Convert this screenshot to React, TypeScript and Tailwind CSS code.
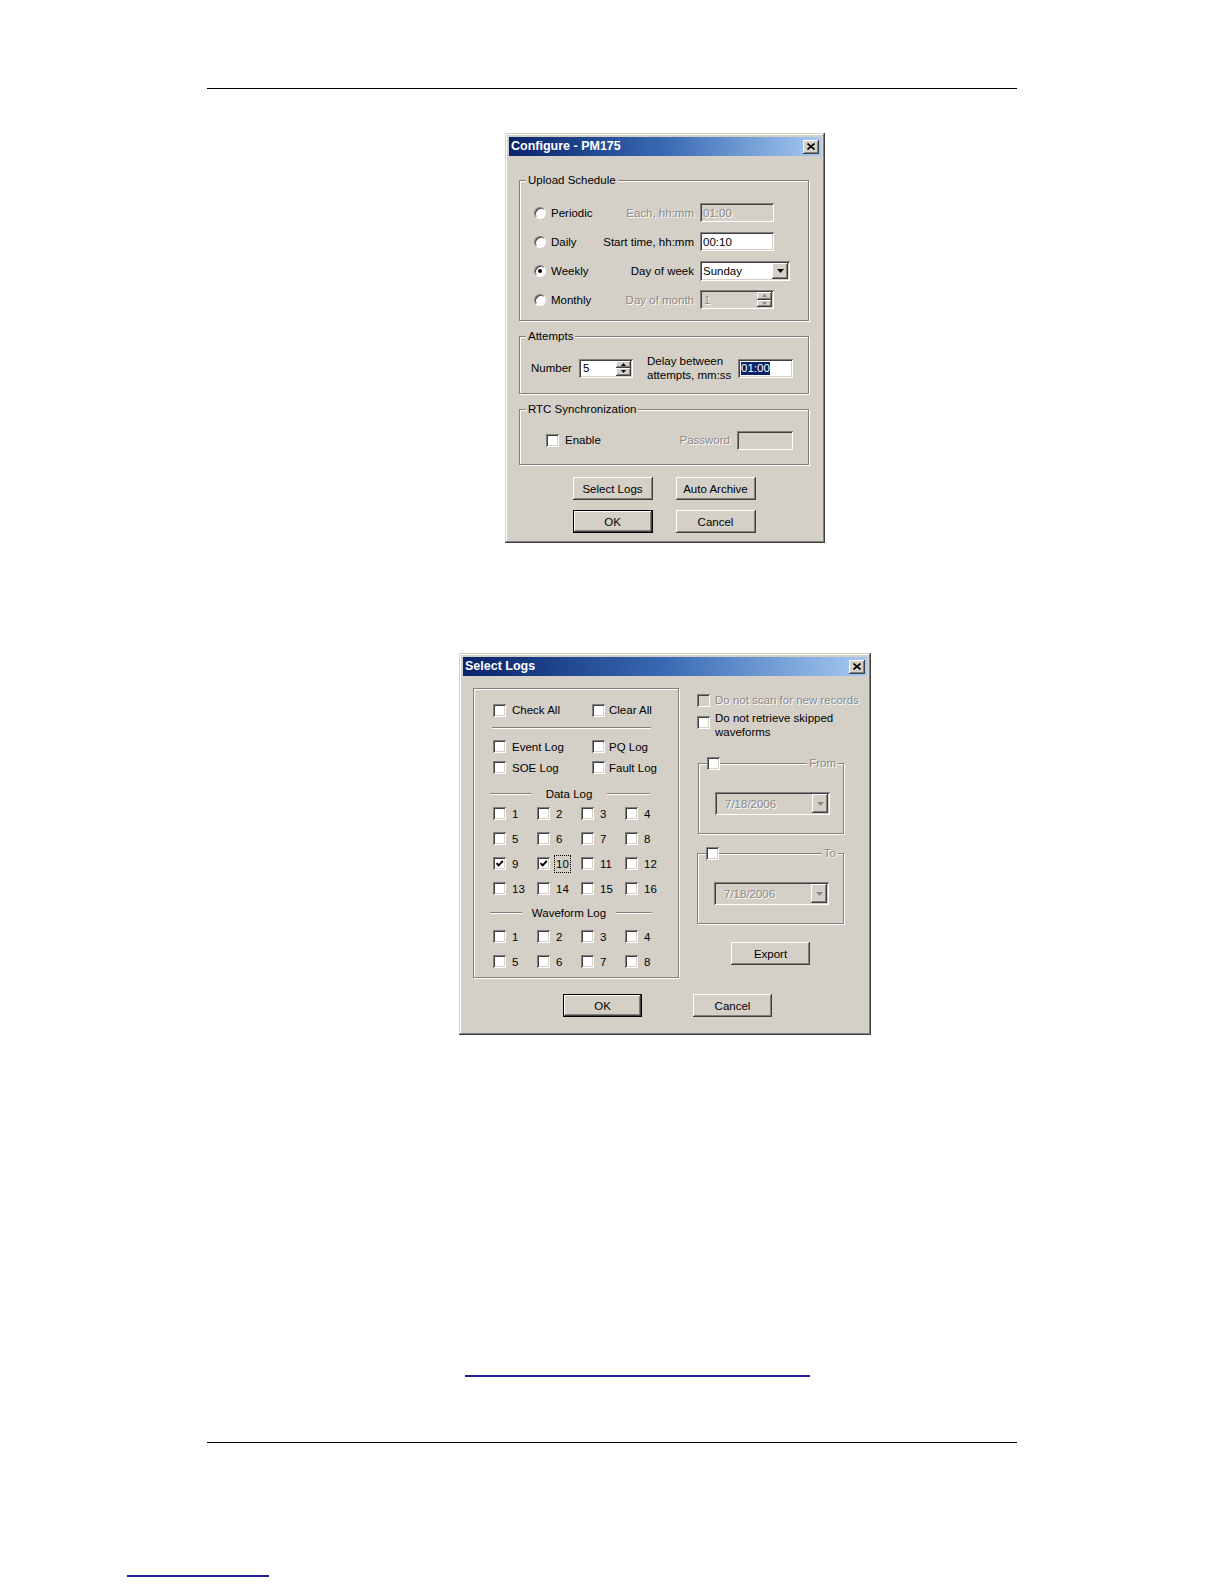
import React from "react";

// classic 3D bevels
const raised =
  "bg-[#d4d0c8] shadow-[inset_-1px_-1px_#404040,inset_1px_1px_#ffffff,inset_-2px_-2px_#808080,inset_2px_2px_#d4d0c8]";
const sunken =
  "shadow-[inset_1px_1px_#808080,inset_-1px_-1px_#ffffff,inset_2px_2px_#404040,inset_-2px_-2px_#d4d0c8]";
const etched = "border border-[#808080] shadow-[inset_1px_1px_#ffffff,1px_1px_#ffffff]";
const dis = "text-[#8a8a8a] [text-shadow:1px_1px_#ffffff]";

function Check({ checked = false, disabled = false }: { checked?: boolean; disabled?: boolean }) {
  return (
    <span
      className={`flex h-[13px] w-[13px] shrink-0 items-center justify-center ${
        disabled ? "bg-[#d4d0c8]" : "bg-white"
      } ${sunken}`}
    >
      {checked && (
        <svg width="9" height="9" viewBox="0 0 9 9">
          <path d="M1.5 4.2 L3.6 6.4 L7.8 2" fill="none" stroke="#000" strokeWidth="1.9" />
        </svg>
      )}
    </span>
  );
}

function Radio({ checked = false }: { checked?: boolean }) {
  return (
    <span className="flex h-[12px] w-[12px] shrink-0 items-center justify-center rounded-full border border-t-[#808080] border-l-[#808080] border-r-white border-b-white bg-white shadow-[inset_1px_1px_#404040]">
      {checked && <span className="h-[4px] w-[4px] rounded-full bg-black" />}
    </span>
  );
}

function Btn({
  children,
  w,
  primary = false,
}: {
  children: React.ReactNode;
  w: string;
  primary?: boolean;
}) {
  return (
    <div
      className={`flex h-[23px] items-center justify-center ${w} ${raised} ${
        primary ? "border border-black" : ""
      }`}
    >
      {children}
    </div>
  );
}

function Arrow({ dir = "down", grey = false, big = false }: { dir?: "up" | "down"; grey?: boolean; big?: boolean }) {
  const fill = grey ? "#8a8a8a" : "#000";
  if (big)
    return (
      <svg width="7" height="4" viewBox="0 0 7 4">
        <path d="M0 0H7L3.5 4z" fill={fill} />
      </svg>
    );
  return (
    <svg width="5" height="3" viewBox="0 0 5 3">
      <path d={dir === "up" ? "M2.5 0L5 3H0z" : "M0 0H5L2.5 3z"} fill={fill} />
    </svg>
  );
}

function Field({
  value,
  w,
  disabled = false,
  selected = false,
}: {
  value?: string;
  w: string;
  disabled?: boolean;
  selected?: boolean;
}) {
  return (
    <div
      className={`flex h-[19px] items-center px-[3px] ${w} ${disabled ? "bg-[#d4d0c8]" : "bg-white"} ${sunken}`}
    >
      {selected ? (
        <span className="bg-[#0a246a] leading-[13px] text-white">{value}</span>
      ) : (
        <span className={disabled ? dis : ""}>{value}</span>
      )}
    </div>
  );
}

function SpinField({ value, w, disabled = false }: { value: string; w: string; disabled?: boolean }) {
  return (
    <div
      className={`flex h-[19px] items-stretch p-[2px] ${w} ${disabled ? "bg-[#d4d0c8]" : "bg-white"} ${sunken}`}
    >
      <span className={`flex flex-1 items-center pl-[2px] ${disabled ? dis : ""}`}>{value}</span>
      <div className="flex w-[15px] flex-col">
        <span className={`flex flex-1 items-center justify-center ${raised}`}>
          <Arrow dir="up" grey={disabled} />
        </span>
        <span className={`flex flex-1 items-center justify-center ${raised}`}>
          <Arrow dir="down" grey={disabled} />
        </span>
      </div>
    </div>
  );
}

function Combo({
  value,
  w,
  h,
  disabled = false,
}: {
  value: string;
  w: string;
  h: string;
  disabled?: boolean;
}) {
  return (
    <div
      className={`flex items-stretch p-[2px] ${w} ${h} ${disabled ? "bg-[#d4d0c8]" : "bg-white"} ${sunken}`}
    >
      <span className={`flex flex-1 items-center ${disabled ? `pl-[8px] ${dis}` : "pl-[1px]"}`}>{value}</span>
      <span className={`flex w-[16px] items-center justify-center ${raised}`}>
        <Arrow big grey={disabled} />
      </span>
    </div>
  );
}

function TitleBar({ title }: { title: string }) {
  return (
    <div className="flex h-[19px] shrink-0 items-center justify-between bg-linear-to-r from-[#0a246a] via-[#3a6ab4] to-[#a6caf0] pl-[2px] pr-[2px]">
      <span className="text-[12.5px] font-bold leading-none text-white">{title}</span>
      <span className={`flex h-[14px] w-[16px] items-center justify-center ${raised}`}>
        <svg width="8" height="7" viewBox="0 0 8 7">
          <path d="M0.5 0.5L7.5 6.5M7.5 0.5L0.5 6.5" stroke="#000" strokeWidth="1.6" />
        </svg>
      </span>
    </div>
  );
}

function Group({
  label,
  className,
  children,
}: {
  label?: string;
  className: string;
  children: React.ReactNode;
}) {
  return (
    <div className={`relative ${etched} ${className}`}>
      {label && (
        <span className="absolute -top-[8px] left-[6px] bg-[#d4d0c8] px-[2px] leading-[14px]">{label}</span>
      )}
      {children}
    </div>
  );
}

const schedule = [
  { name: "Periodic", right: "Each, hh:mm", on: false, rightDis: true, field: <Field value="01:00" w="w-[74px]" disabled /> },
  { name: "Daily", right: "Start time, hh:mm", on: false, rightDis: false, field: <Field value="00:10" w="w-[74px]" /> },
  { name: "Weekly", right: "Day of week", on: true, rightDis: false, field: <Combo value="Sunday" w="w-[90px]" h="h-[20px]" /> },
  { name: "Monthly", right: "Day of month", on: false, rightDis: true, field: <SpinField value="1" w="w-[74px]" disabled /> },
];

function ConfigureDialog() {
  return (
    <div className="ml-[505px] mt-[44px] flex h-[410px] w-[320px] flex-col bg-[#d4d0c8] p-[4px] shadow-[inset_-1px_-1px_#404040,inset_1px_1px_#d4d0c8,inset_-2px_-2px_#808080,inset_2px_2px_#ffffff]">
      <TitleBar title="Configure - PM175" />
      <div className="w-[300px] pl-[10px]">
        <Group label="Upload Schedule" className="mt-[24px] h-[141px] w-[290px] pl-[14px] pt-[17px]">
          {schedule.map((r) => (
            <div key={r.name} className="flex h-[29px] items-center">
              <div className="flex w-[160px] items-center">
                <Radio checked={r.on} />
                <span className="ml-[5px]">{r.name}</span>
                <span className={`ml-auto ${r.rightDis ? dis : ""}`}>{r.right}</span>
              </div>
              <div className="ml-[6px]">{r.field}</div>
            </div>
          ))}
        </Group>

        <Group label="Attempts" className="mt-[15px] h-[58px] w-[290px] pl-[11px] pt-[21px]">
          <div className="flex h-[20px] items-center">
            <span className="w-[48px]">Number</span>
            <SpinField value="5" w="w-[54px]" />
            <span className="ml-[14px] w-[86px] leading-[14px]">
              Delay between
              <br />
              attempts, mm:ss
            </span>
            <div className="ml-[5px]">
              <Field value="01:00" w="w-[55px]" selected />
            </div>
          </div>
        </Group>

        <Group label="RTC Synchronization" className="mt-[15px] h-[56px] w-[290px] pl-[26px] pr-[15px] pt-[20px]">
          <div className="flex h-[20px] items-center">
            <Check />
            <span className="ml-[6px]">Enable</span>
            <span className={`ml-auto ${dis}`}>Password</span>
            <div className="ml-[7px]">
              <Field w="w-[56px]" disabled />
            </div>
          </div>
        </Group>

        <div className="mt-[12px] flex w-[290px] justify-center gap-[23px]">
          <Btn w="w-[80px]">Select Logs</Btn>
          <Btn w="w-[80px]">Auto Archive</Btn>
        </div>
        <div className="mt-[10px] flex w-[290px] justify-center gap-[23px]">
          <Btn w="w-[80px]" primary>
            OK
          </Btn>
          <Btn w="w-[80px]">Cancel</Btn>
        </div>
      </div>
    </div>
  );
}

function NumGrid({ rows, checked = [], focus }: { rows: number[][]; checked?: number[]; focus?: number }) {
  return (
    <div>
      {rows.map((row, i) => (
        <div key={i} className="flex h-[25px] items-center">
          {row.map((n) => (
            <div key={n} className="flex w-[44px] items-center">
              <Check checked={checked.includes(n)} />
              <span
                className={`ml-[6px] ${
                  focus === n ? "outline-1 outline-offset-1 outline-dotted outline-black" : ""
                }`}
              >
                {n}
              </span>
            </div>
          ))}
        </div>
      ))}
    </div>
  );
}

function Header({ text, a, b, c }: { text: string; a: string; b: string; c: string }) {
  return (
    <div className="-ml-[3px] flex h-[14px] items-center">
      <span className={`h-[2px] border-t border-b border-t-[#808080] border-b-white ${a}`} />
      <span className={`text-center ${b}`}>{text}</span>
      <span className={`h-[2px] border-t border-b border-t-[#808080] border-b-white ${c}`} />
    </div>
  );
}

function DateBox({ label, className }: { label: string; className: string }) {
  return (
    <div className={`relative h-[71px] ${etched} ${className}`}>
      <span className="absolute -top-[7px] left-[8px]">
        <Check />
      </span>
      <span className={`absolute -top-[8px] right-[5px] bg-[#d4d0c8] px-[2px] leading-[14px] ${dis}`}>{label}</span>
      <div className="pl-[16px]">
        <Combo value="7/18/2006" w="w-[115px]" h="h-[23px]" disabled />
      </div>
    </div>
  );
}

function SelectLogsDialog() {
  return (
    <div className="ml-[459px] mt-[110px] flex h-[382px] w-[412px] flex-col bg-[#d4d0c8] p-[4px] shadow-[inset_-1px_-1px_#404040,inset_1px_1px_#d4d0c8,inset_-2px_-2px_#808080,inset_2px_2px_#ffffff]">
      <TitleBar title="Select Logs" />
      <div className="mt-[12px] flex pl-[10px]">
        <Group className="h-[290px] w-[206px] pl-[19px] pt-[11px]">
          <div className="flex h-[20px] items-center">
            <div className="flex w-[99px] items-center">
              <Check />
              <span className="ml-[6px]">Check All</span>
            </div>
            <Check />
            <span className="ml-[4px]">Clear All</span>
          </div>
          <div className="-ml-[1px] mt-[7px] h-[2px] w-[159px] border-t border-b border-t-[#808080] border-b-white" />
          <div className="mt-[7px] flex h-[21px] items-center">
            <div className="flex w-[99px] items-center">
              <Check />
              <span className="ml-[6px]">Event Log</span>
            </div>
            <Check />
            <span className="ml-[4px]">PQ Log</span>
          </div>
          <div className="flex h-[21px] items-center">
            <div className="flex w-[99px] items-center">
              <Check />
              <span className="ml-[6px]">SOE Log</span>
            </div>
            <Check />
            <span className="ml-[4px]">Fault Log</span>
          </div>
          <div className="mt-[9px]">
            <Header text="Data Log" a="w-[41px]" b="w-[76px]" c="w-[43px]" />
          </div>
          <NumGrid
            rows={[
              [1, 2, 3, 4],
              [5, 6, 7, 8],
              [9, 10, 11, 12],
              [13, 14, 15, 16],
            ]}
            checked={[9, 10]}
            focus={10}
          />
          <div className="mt-[5px]">
            <Header text="Waveform Log" a="w-[32px]" b="w-[94px]" c="w-[36px]" />
          </div>
          <div className="mt-[4px]">
            <NumGrid
              rows={[
                [1, 2, 3, 4],
                [5, 6, 7, 8],
              ]}
            />
          </div>
        </Group>

        <div className="ml-[18px] w-[150px]">
          <div className="mt-[5px] flex h-[14px] items-center whitespace-nowrap">
            <Check disabled />
            <span className={`ml-[5px] ${dis}`}>Do not scan for new records</span>
          </div>
          <div className="mt-[4px] flex items-start">
            <span className="mt-[5px]">
              <Check />
            </span>
            <span className="ml-[5px] leading-[14px]">
              Do not retrieve skipped
              <br />
              waveforms
            </span>
          </div>
          <DateBox label="From" className="ml-[1px] mt-[24px] w-[146px] pt-[28px]" />
          <DateBox label="To" className="mt-[19px] w-[147px] pt-[28px]" />
          <div className="ml-[34px] mt-[18px]">
            <Btn w="w-[79px]">Export</Btn>
          </div>
        </div>
      </div>
      <div className="mt-[16px] flex gap-[51px] pl-[100px]">
        <Btn w="w-[79px]" primary>
          OK
        </Btn>
        <Btn w="w-[79px]">Cancel</Btn>
      </div>
    </div>
  );
}

export default function App() {
  return (
    <div className="h-[1584px] w-[1224px] overflow-hidden bg-white pt-[88px] font-['Liberation_Sans',Arial,sans-serif] text-[11.5px] leading-[14px] text-black">
      <div className="ml-[207px] h-px w-[810px] bg-black" />
      <ConfigureDialog />
      <SelectLogsDialog />
      <div className="ml-[465px] mt-[340px] h-[2px] w-[345px] bg-[#1e1e9e]" />
      <div className="ml-[207px] mt-[65px] h-px w-[810px] bg-black" />
      <div className="ml-[127px] mt-[132px] h-[2px] w-[142px] bg-[#1e1e9e]" />
    </div>
  );
}
